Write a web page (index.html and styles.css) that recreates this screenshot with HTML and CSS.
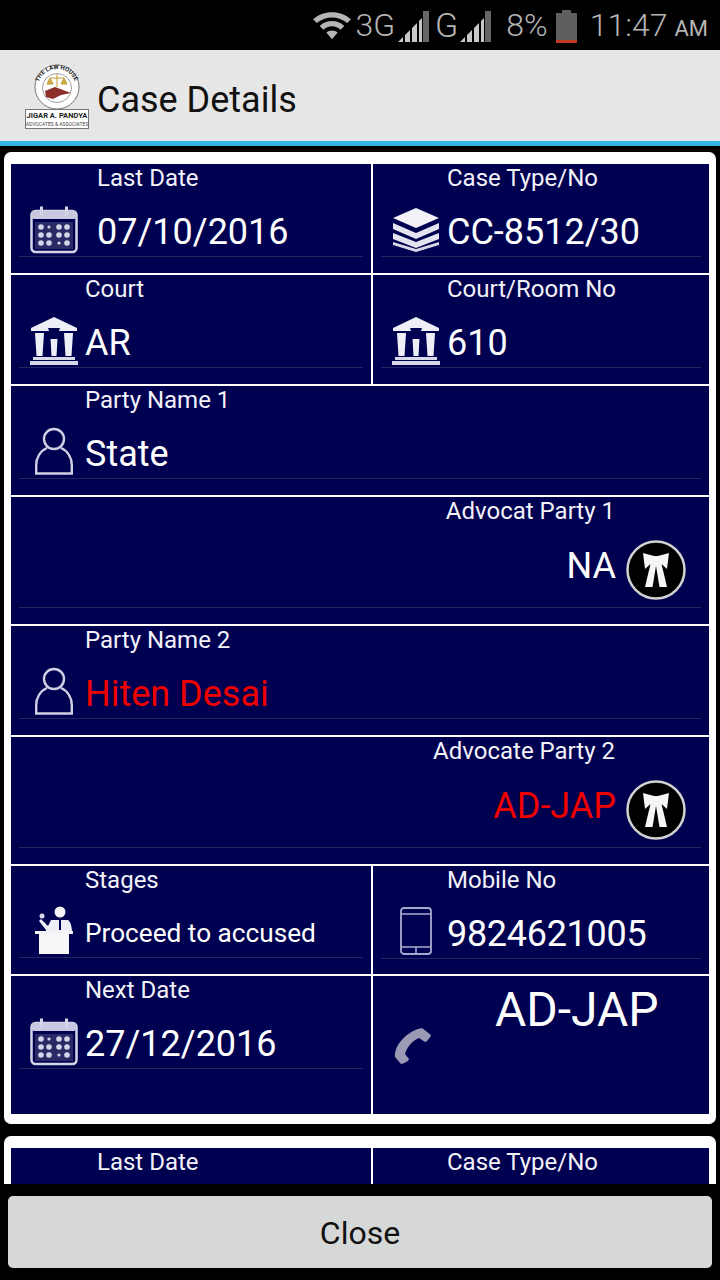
FILE: index.html
```html
<!DOCTYPE html>
<html lang="en">
<head>
    <meta charset="UTF-8">
    <meta name="viewport" content="width=device-width, initial-scale=1.0">
    <title>Case Details</title>
    <link rel="stylesheet" href="styles.css">
</head>
<body>
    <!-- Icon set -->
    <svg class="icon-defs" width="0" height="0">
        <symbol id="i-calendar" viewBox="0 0 48 48">
            <rect x="1.5" y="5" width="45" height="41" rx="4" fill="none" stroke="#d5d5e8" stroke-width="2.5"/>
            <rect x="1.5" y="5" width="45" height="8" rx="3" fill="#c8c8e0"/>
            <rect x="10" y="0.5" width="3" height="9" fill="#d5d5e8"/>
            <rect x="35" y="0.5" width="3" height="9" fill="#d5d5e8"/>
            <rect x="5" y="16" width="38" height="27" fill="#2a2a66"/>
            <g fill="#d5d5e8">
                <circle cx="11" cy="21" r="2.8"/><circle cx="19" cy="21" r="1.6"/><circle cx="29" cy="21" r="2.8"/><circle cx="37" cy="21" r="2.8"/>
                <circle cx="11" cy="29" r="2.8"/><circle cx="19" cy="29" r="2.8"/><circle cx="29" cy="29" r="2.8"/><circle cx="37" cy="29" r="2.8"/>
                <circle cx="11" cy="37" r="2.8"/><circle cx="19" cy="37" r="2.8"/><circle cx="29" cy="37" r="1.6"/><circle cx="37" cy="37" r="2.8"/>
            </g>
        </symbol>
        <symbol id="i-stack" viewBox="0 0 48 44">
            <path d="M24 0 47 10 24 20 1 10Z" fill="#f2f2f8"/>
            <path d="M1 15 24 25 47 15V21L24 31 1 21Z" fill="#e4e4f0"/>
            <path d="M1 25 24 34 47 25V31L24 40 1 31Z" fill="#e4e4f0"/>
            <path d="M1 34 24 41 47 34V37L24 44 1 37Z" fill="#d8d8e8"/>
        </symbol>
        <symbol id="i-bank" viewBox="0 0 48 48">
            <path d="M24 0 47 11V14H1V11Z" fill="#eeeef6"/>
            <path d="M18 11H30L27.500 18 24 21 20.500 18Z" fill="#000050"/>
            <path d="M5 16H14L12.500 39H6.500Z" fill="#eeeef6"/>
            <path d="M20.500 22H27.500L26.500 39H21.500Z" fill="#eeeef6"/>
            <path d="M34 16H43L41.500 39H35.500Z" fill="#eeeef6"/>
            <rect x="3" y="40" width="42" height="3" fill="#d8d8e8"/>
            <rect x="0" y="44" width="48" height="4" fill="#d8d8e8"/>
        </symbol>
        <symbol id="i-person" viewBox="0 0 38 48">
            <circle cx="19" cy="12" r="10" fill="none" stroke="#d0d0e4" stroke-width="2.4"/>
            <path d="M12 21C5 24 1.200 31 1.200 38V46.500H36.800V38C36.800 31 33 24 26 21" fill="none" stroke="#d0d0e4" stroke-width="2.4"/>
        </symbol>
        <symbol id="i-gown" viewBox="0 0 60 60">
            <circle cx="30" cy="30" r="28.5" fill="#000" stroke="#d2d2d2" stroke-width="2.5"/>
            <path d="M17 13 28 16H32L43 13 41 29 35.500 24 41 47H33.500L30 26 26.500 47H19L24.500 24 19 29Z" fill="#f6f6f6"/>
        </symbol>
        <symbol id="i-speaker" viewBox="0 0 38 48">
            <circle cx="25" cy="6" r="5.500" fill="#f4f4f8"/>
            <path d="M16 14H33C36 16 37 22 37 26H11V24L4 15 6 13 13 20Z" fill="#eeeef6"/>
            <rect x="24" y="14" width="2" height="10" fill="#000050"/>
            <circle cx="7" cy="10" r="2.500" fill="#d8d8e8"/>
            <rect x="0" y="25" width="38" height="3" fill="#f4f4f8"/>
            <rect x="4" y="28" width="30" height="20" fill="#f8f8fb"/>
        </symbol>
        <symbol id="i-mobile" viewBox="0 0 32 48">
            <rect x="1" y="1" width="30" height="46" rx="3" fill="none" stroke="#a9a9d0" stroke-width="1.8"/>
            <path d="M1 7H31M1 40H31M16 40V47" fill="none" stroke="#a9a9d0" stroke-width="1.5"/>
        </symbol>
        <symbol id="i-handset" viewBox="0 0 38 36">
            <path d="M28 0 37 7C37 8.500 33 14 31 14L25 10C18 13 13 19 11 26L15 31C15 33 9 36 7 36L1 29C0 17 13 3 28 0Z" fill="#9a9ab4"/>
        </symbol>
        <symbol id="i-signal" viewBox="0 0 31 32">
            <path d="M0 32 5 27V32ZM7 25 12 20V32H7ZM14 18 19 13V32H14Z" fill="#c8c8c8"/>
            <path d="M21 11 24 8V32H21Z" fill="#c8c8c8"/>
            <path d="M25 1H31V32H25Z" fill="#666"/>
        </symbol>
    </svg>

    <!-- Status bar -->
    <div class="status-bar">
        <svg class="st-wifi" width="38" height="30" viewBox="0 0 40 30">
            <path d="M0 9C11-1 29-1 40 9L36 13C27 5 13 5 4 13Z" fill="#b5b5b5"/>
            <path d="M7 16C14 9 26 9 33 16L29 20C24 15 16 15 11 20Z" fill="#b5b5b5"/>
            <path d="M14 23C17 20 23 20 26 23L20 30Z" fill="#b5b5b5"/>
        </svg>
        <span class="st-3g">3G</span>
        <svg class="st-signal" width="31" height="32"><use href="#i-signal"/></svg>
        <span class="st-g">G</span>
        <svg class="st-signal" width="31" height="32"><use href="#i-signal"/></svg>
        <span class="st-batt">8%</span>
        <svg class="st-battery" width="21" height="33" viewBox="0 0 21 33">
            <path d="M6 0H15V3H21V33H0V3H6Z" fill="#5f5f5f"/>
            <rect y="30" width="21" height="3" fill="#c03a24"/>
        </svg>
        <span class="st-time">11:47</span>
        <span class="st-ampm">AM</span>
    </div>

    <!-- Header -->
    <div class="app-header">
        <svg class="logo" width="64" height="66" viewBox="0 0 64 66">
            <path id="logo-arc" d="M13 25A19 19 0 0 1 51 25" fill="none"/>
            <circle cx="32" cy="24" r="22" fill="#fff" stroke="#555" stroke-width="0.8"/>
            <circle cx="32" cy="25" r="14.500" fill="#fff" stroke="#777" stroke-width="0.7"/>
            <text class="logo-arc-text"><textPath href="#logo-arc" startOffset="6">THE LAW HOUSE</textPath></text>
            <path d="M25 15H39M32 11V24M25 15 22 21H28ZM39 15 36 21H42Z" fill="#d4b04a" stroke="#c09a30" stroke-width="1"/>
            <path d="M20 28 30 24 46 30 36 32 28 36 21 34Z" fill="#8c2f2a"/>
            <rect x="0.500" y="46.500" width="63" height="19" fill="#fff" stroke="#777"/>
            <text class="logo-name" x="32" y="55">JIGAR A. PANDYA</text>
            <text class="logo-sub" x="32" y="63">ADVOCATES &amp; ASSOCIATES</text>
        </svg>
        <h1 class="app-title">Case Details</h1>
    </div>

    <!-- List of cases -->
    <div class="case-list">
        <div class="case-card">
            <div class="case-grid">
                <div class="cell wide-pad">
                    <div class="cell-label">Last Date</div>
                    <div class="cell-value"><svg class="ico"><use href="#i-calendar"/></svg><span>07/10/2016</span></div>
                </div>
                <div class="cell right-col">
                    <div class="cell-label">Case Type/No</div>
                    <div class="cell-value"><svg class="ico"><use href="#i-stack"/></svg><span>CC-8512/30</span></div>
                </div>

                <div class="cell">
                    <div class="cell-label">Court</div>
                    <div class="cell-value"><svg class="ico"><use href="#i-bank"/></svg><span>AR</span></div>
                </div>
                <div class="cell right-col">
                    <div class="cell-label">Court/Room No</div>
                    <div class="cell-value"><svg class="ico"><use href="#i-bank"/></svg><span>610</span></div>
                </div>

                <div class="cell full">
                    <div class="cell-label">Party Name 1</div>
                    <div class="cell-value"><svg class="ico person"><use href="#i-person"/></svg><span>State</span></div>
                </div>

                <div class="cell full advocate">
                    <div class="cell-label">Advocat Party 1</div>
                    <div class="cell-value"><span>NA</span><svg class="gown"><use href="#i-gown"/></svg></div>
                </div>

                <div class="cell full">
                    <div class="cell-label">Party Name 2</div>
                    <div class="cell-value red"><svg class="ico person"><use href="#i-person"/></svg><span>Hiten Desai</span></div>
                </div>

                <div class="cell full advocate">
                    <div class="cell-label">Advocate Party 2</div>
                    <div class="cell-value red"><span>AD-JAP</span><svg class="gown"><use href="#i-gown"/></svg></div>
                </div>

                <div class="cell stage-row">
                    <div class="cell-label">Stages</div>
                    <div class="cell-value small"><svg class="ico person"><use href="#i-speaker"/></svg><span>Proceed to accused</span></div>
                </div>
                <div class="cell stage-row right-col">
                    <div class="cell-label">Mobile No</div>
                    <div class="cell-value phone-no"><svg class="ico mobile"><use href="#i-mobile"/></svg><span>9824621005</span></div>
                </div>

                <div class="cell last-row">
                    <div class="cell-label">Next Date</div>
                    <div class="cell-value"><svg class="ico"><use href="#i-calendar"/></svg><span>27/12/2016</span></div>
                </div>
                <div class="cell call-cell last-row">
                    <div class="call-name">AD-JAP</div>
                    <svg class="handset"><use href="#i-handset"/></svg>
                </div>
            </div>
        </div>

        <div class="case-card">
            <div class="case-grid">
                <div class="cell wide-pad">
                    <div class="cell-label">Last Date</div>
                </div>
                <div class="cell right-col">
                    <div class="cell-label">Case Type/No</div>
                </div>
            </div>
        </div>
    </div>

    <!-- Footer button -->
    <div class="footer">
        <button class="close-btn">Close</button>
    </div>
</body>
</html>
```
FILE: styles.css
```css
body {
    font-family: 'Roboto', sans-serif;
    margin: 0;
    width: 720px;
    height: 1280px;
    overflow: hidden;
    background: #000;
    color: #fff;
    display: flex;
    flex-direction: column;
}

.icon-defs {
    position: absolute;
}

/* Status bar */
.status-bar {
    height: 50px;
    flex: none;
    display: flex;
    align-items: center;
    justify-content: flex-end;
    padding-right: 12px;
    color: #b5b5b5;
    font-size: 32px;
    font-weight: 300;
}

.st-wifi {
    margin-right: 4px;
}

.st-3g {
    margin-right: 1px;
}

.st-signal {
    margin: 2px 0 0 2px;
}

.st-g {
    margin-left: 6px;
    font-size: 34px;
}

.st-batt {
    margin-left: 15px;
}

.st-battery {
    margin: 2px 0 0 8px;
}

.st-time {
    margin-left: 13px;
}

.st-ampm {
    margin: 6px 0 0 7px;
    font-size: 22px;
    font-weight: 400;
}

/* Header */
.app-header {
    height: 91px;
    flex: none;
    display: flex;
    align-items: center;
    padding-left: 25px;
    background: #e6e6e6;
    border-bottom: 5px solid #33b5e5;
}

.logo {
    margin-right: 8px;
}

.logo-arc-text {
    font-size: 6px;
    font-weight: 700;
    fill: #222;
}

.logo-name {
    font-size: 7.500px;
    font-weight: 700;
    fill: #222;
    text-anchor: middle;
}

.logo-sub {
    font-size: 5px;
    fill: #444;
    text-anchor: middle;
}

.app-title {
    margin: 8px 0 0;
    font-size: 36px;
    font-weight: 400;
    color: #111;
}

/* Cards */
.case-list {
    flex: 1;
    min-height: 0;
    overflow: hidden;
    padding: 6px 4px 0;
}

.case-card {
    background: #fff;
    border-radius: 7px;
    padding: 12px 7px 10px;
    margin-bottom: 12px;
}

.case-grid {
    display: grid;
    grid-template-columns: 360px 336px;
    gap: 2px;
}

.cell {
    background: #000050;
    height: 109px;
    box-sizing: border-box;
    padding: 0 8px;
}

.full {
    grid-column: 1 / -1;
}

.advocate {
    height: 127px;
}

.stage-row {
    height: 108px;
}

.last-row {
    height: 138px;
}

.cell-label {
    height: 28px;
    line-height: 28px;
    font-size: 24px;
    padding-left: 66px;
    color: #f2f2f8;
}

.cell-value {
    height: 49px;
    display: flex;
    align-items: center;
    border-bottom: 1px solid #24245f;
    font-size: 36px;
    padding: 15px 0 0 11px;
}

.ico {
    width: 48px;
    height: 48px;
    flex: none;
    margin: -4px 7px 0 0;
}

.ico.person {
    width: 38px;
    margin: -6px 12px 0 5px;
}

.ico.mobile {
    width: 32px;
    margin: -6px 15px 0 8px;
}

.wide-pad .cell-label {
    padding-left: 78px;
}

.wide-pad .ico {
    margin-right: 19px;
}

.small {
    font-size: 26.200px;
    height: 48px;
}

.phone-no {
    letter-spacing: -0.3px;
}

.red {
    color: #ee0000;
}

.advocate .cell-label {
    text-align: right;
    padding-right: 86px;
}

.advocate .cell-value {
    justify-content: flex-end;
    padding: 7px 15px 0 0;
    height: 75px;
}

.advocate .cell-value span {
    margin: -8px -2px 0 0;
}

.gown {
    width: 60px;
    height: 60px;
    margin-left: 12px;
}

/* Call cell */
.call-name {
    font-size: 48px;
    line-height: 50px;
    padding: 9px 0 0 114px;
}

.handset {
    display: block;
    width: 38px;
    height: 36px;
    margin: -7px 0 0 13px;
}

/* Footer */
.footer {
    height: 96px;
    flex: none;
    box-sizing: border-box;
    padding: 12px 8px;
}

.close-btn {
    display: block;
    width: 100%;
    height: 72px;
    padding-top: 2px;
    border: none;
    border-radius: 5px;
    background: #d6d7d7;
    color: #111;
    font-family: 'Roboto', sans-serif;
    font-size: 32px;
}
```
